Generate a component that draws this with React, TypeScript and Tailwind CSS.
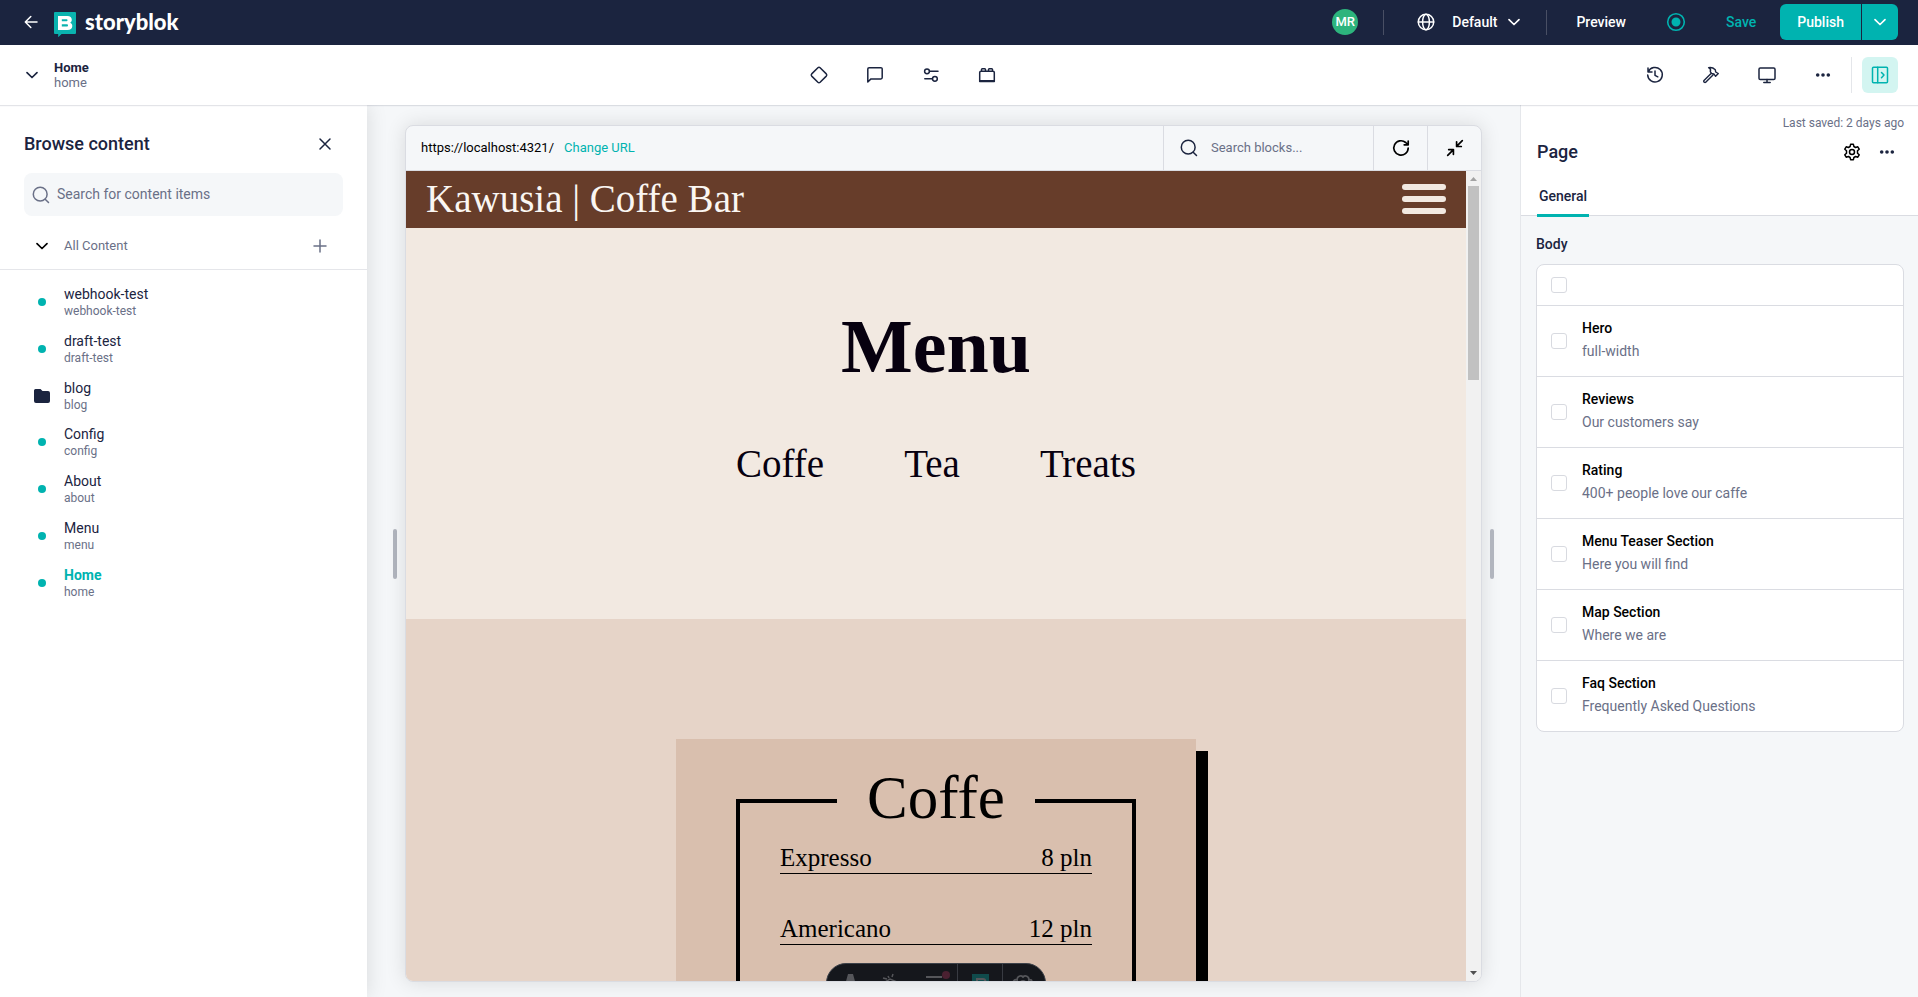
import type { ReactNode } from "react";

type IconProps = { children: ReactNode; size?: string; stroke?: string };

function Icon({ children, size = "size-5", stroke = "1.5" }: IconProps) {
  return (
    <svg
      viewBox="0 0 20 20"
      className={`${size} shrink-0`}
      fill="none"
      stroke="currentColor"
      strokeWidth={stroke}
      strokeLinecap="round"
      strokeLinejoin="round"
      aria-hidden="true"
    >
      {children}
    </svg>
  );
}

const ChevronDown = () => (
  <Icon stroke="1.7">
    <path d="M5 7.7l5 4.8 5-4.8" />
  </Icon>
);

const SearchIcon = () => (
  <Icon>
    <circle cx="9.2" cy="9.2" r="6.9" />
    <path d="M14.200 14.200l3.300 3.300" />
  </Icon>
);

const Dots = () => (
  <svg viewBox="0 0 20 20" className="size-5" fill="currentColor" aria-hidden="true">
    <circle cx="4.7" cy="10" r="1.8" />
    <circle cx="10" cy="10" r="1.8" />
    <circle cx="15.3" cy="10" r="1.8" />
  </svg>
);

function IconButton({ label, children }: { label: string; children: ReactNode }) {
  return (
    <button type="button" aria-label={label} className="flex size-9 items-center justify-center">
      {children}
    </button>
  );
}

function TopBar() {
  return (
    <header className="flex h-[45px] shrink-0 items-center justify-between bg-[#1b243f] pr-5 pb-px pl-[21px] text-sm font-medium text-white">
      <div className="flex items-center">
        <button type="button" aria-label="Back" className="mr-[13px]">
          <Icon>
            <path d="M16 10H4.5M9.8 4.5L4.3 10l5.5 5.5" />
          </Icon>
        </button>
        <a href="#" className="flex items-center gap-[9px]">
          <svg viewBox="0 0 22 25" className="mt-1 h-[25px] w-[22px]" aria-hidden="true">
            <path d="M1 0h20a1 1 0 0 1 1 1v20a1 1 0 0 1-1 1H7.600l-3.400 3.200V22H1a1 1 0 0 1-1-1V1a1 1 0 0 1 1-1z" fill="#0ab3af" />
            <path
              fillRule="evenodd"
              fill="#fff"
              d="M4 4h9.500c2.600 0 4.300 1.500 4.300 3.700 0 1.400-.6 2.400-1.700 3 1.400.5 2.200 1.600 2.200 3.200 0 2.600-1.900 4.100-4.800 4.100H4zM7.800 7.300v2h4.600c.7 0 1.100-.4 1.100-1s-.4-1-1.100-1zM7.800 12.300v2.200h5c.7 0 1.200-.4 1.200-1.100s-.5-1.100-1.200-1.100z"
            />
          </svg>
          <span className="font-[Lato] text-[22px] leading-6 font-black">storyblok</span>
        </a>
      </div>
      <div className="flex items-center">
        <span className="flex size-[26px] items-center justify-center rounded-full bg-[#2db47d] text-[13px]">MR</span>
        <span className="ml-[25px] h-[25px] w-px bg-[#494f64]" />
        <button type="button" className="ml-8 flex items-center">
          <Icon>
            <circle cx="10" cy="10" r="7.7" />
            <ellipse cx="10" cy="10" rx="3.400" ry="7.7" />
            <path d="M2.300 10h15.400" />
          </Icon>
          <span className="mr-[7px] ml-4">Default</span>
          <ChevronDown />
        </button>
        <span className="ml-[22px] h-[25px] w-px bg-[#494f64]" />
        <button type="button" className="ml-[29px]">Preview</button>
        <button type="button" aria-label="Live status" className="ml-10 text-[#00b3b0]">
          <Icon stroke="1.6">
            <circle cx="10" cy="10" r="8.300" />
            <circle cx="10" cy="10" r="3.700" fill="currentColor" />
          </Icon>
        </button>
        <button type="button" className="ml-10 text-[#00b3b0]">Save</button>
        <div className="ml-6 flex h-9 gap-px overflow-hidden rounded-md">
          <button type="button" className="bg-[#00b3b0] px-[17px]">Publish</button>
          <button type="button" aria-label="Publish options" className="flex w-9 items-center justify-center bg-[#00b3b0]">
            <ChevronDown />
          </button>
        </div>
      </div>
    </header>
  );
}

function ToolBar() {
  return (
    <div className="relative z-10 flex h-[60px] shrink-0 items-center justify-between bg-white pr-5 pl-[22px] text-[#1b243f] shadow-[0_1px_1px_rgba(27,36,63,0.12)]">
      <div className="flex w-[147px] items-center gap-3">
        <button type="button" aria-label="Toggle navigation">
          <ChevronDown />
        </button>
        <div className="text-[13px] leading-[15px]">
          <h1 className="font-bold">Home</h1>
          <p className="text-[#6a7087]">home</p>
        </div>
      </div>
      <div className="flex gap-5">
        <IconButton label="Components">
          <Icon>
            <path d="M8.900 2.700a1.600 1.600 0 0 1 2.200 0l6.200 6.200a1.600 1.600 0 0 1 0 2.200l-6.200 6.200a1.600 1.600 0 0 1-2.200 0l-6.200-6.200a1.600 1.600 0 0 1 0-2.200z" />
          </Icon>
        </IconButton>
        <IconButton label="Comments">
          <Icon>
            <path d="M2.800 17V4a1.300 1.300 0 0 1 1.300-1.300h11.800A1.300 1.300 0 0 1 17.200 4v8.600a1.300 1.300 0 0 1-1.300 1.300H6z" />
          </Icon>
        </IconButton>
        <IconButton label="Settings">
          <Icon>
            <circle cx="6" cy="6.300" r="2.400" />
            <path d="M8.600 6.300H17M3.800 13.800h7.600" />
            <circle cx="13.900" cy="13.800" r="2.400" />
          </Icon>
        </IconButton>
        <IconButton label="Blocks">
          <Icon>
            <path d="M4 6.300h12a1.300 1.300 0 0 1 1.300 1.300v8.900H2.700V7.600A1.300 1.300 0 0 1 4 6.300zM4.500 6V4.500a.8.8 0 0 1 .8-.8h2.400a.8.8 0 0 1 .8.8V6M11.500 6V4.500a.8.8 0 0 1 .8-.8h2.400a.8.8 0 0 1 .8.8V6M3 15.700h14" />
          </Icon>
        </IconButton>
      </div>
      <div className="flex items-center gap-5">
        <IconButton label="History">
          <Icon>
            <path d="M3 3v4h4M3.300 6.800A7.300 7.300 0 1 1 2.700 10M10 6v4.300l2.800 1.500" />
          </Icon>
        </IconButton>
        <IconButton label="Tools">
          <Icon stroke="1.4">
            <path d="M10.300 8.300L3 15.600a.9.900 0 0 0 0 1.300l.4.400a.9.900 0 0 0 1.300 0l7.300-7.300M7.600 2.700c2.600-.5 4.800.2 6.700 2.100l.4 2.200 2.600 1.500-2.700 2.800-1.700-2.400-2.400-.4-1.200-1.800c.6-1.600 0-3.200-1.700-4z" />
          </Icon>
        </IconButton>
        <IconButton label="Device">
          <Icon>
            <rect x="2" y="3" width="16" height="11.500" rx="1.300" />
            <path d="M10 14.500v2.800M6.800 17.500h6.400" />
          </Icon>
        </IconButton>
        <IconButton label="More">
          <Dots />
        </IconButton>
        <div className="-ml-[10px] flex items-center gap-[10px]">
          <span className="h-9 w-px bg-[#e4e6ea]" />
          <button type="button" aria-label="Toggle sidebar" className="flex size-9 items-center justify-center rounded-md bg-[#d3f5f1] text-[#00b3b0]">
            <Icon>
              <rect x="2.500" y="2.300" width="15" height="15.400" rx="1" />
              <path d="M7.700 2.300v15.400M11.500 7.500l2.500 2.600-2.500 2.600" />
            </Icon>
          </button>
        </div>
      </div>
    </div>
  );
}

const stories = [
  { name: "webhook-test" },
  { name: "draft-test" },
  { name: "blog", folder: true },
  { name: "Config" },
  { name: "About" },
  { name: "Menu" },
  { name: "Home", active: true },
];

function ContentBrowser() {
  return (
    <aside className="relative w-[367px] shrink-0 bg-white text-[#1b243f] shadow-[0_0_20px_rgba(0,0,0,0.12)]">
      <div className="px-6 pt-6">
        <div className="flex h-[30px] items-center justify-between pr-2">
          <h2 className="text-lg font-medium">Browse content</h2>
          <button type="button" aria-label="Close">
            <Icon>
              <path d="M5 5l10 10M15 5L5 15" />
            </Icon>
          </button>
        </div>
        <label className="mt-[14px] flex h-[43px] items-center gap-[6px] rounded-lg bg-[#f5f7f9] pl-[7px] text-[#6a7087]">
          <SearchIcon />
          <input
            type="search"
            aria-label="Search for content items"
            placeholder="Search for content items"
            className="min-w-0 flex-1 bg-transparent pb-0.5 text-sm outline-none placeholder:text-[#6a7087]"
          />
        </label>
      </div>
      <div className="mt-[13px] flex h-[41px] items-center border-b border-[#e5e6ea] pr-[37px] pb-[7px] pl-8 text-[13px] text-[#6a7087]">
        <button type="button" aria-label="Collapse folder" className="text-black">
          <ChevronDown />
        </button>
        <span className="ml-3 flex-1">All Content</span>
        <button type="button" aria-label="Add content">
          <Icon>
            <path d="M10 4v12M4 10h12" />
          </Icon>
        </button>
      </div>
      <nav className="grid h-[336px] auto-rows-fr pt-[9px] pl-8">
        {stories.map(({ name, folder, active }) => (
          <a key={name} href="#" className="flex items-center gap-3">
            <span className="flex w-5 justify-center">
              {folder ? (
                <svg viewBox="0 0 16 14" className="h-[14px] w-4" fill="currentColor" aria-hidden="true">
                  <path d="M1.500 0h5L8.500 2H14a2 2 0 0 1 2 2v8a2 2 0 0 1-2 2H2a2 2 0 0 1-2-2V1.500A1.500 1.500 0 0 1 1.500 0z" />
                </svg>
              ) : (
                <span className="size-2 rounded-full bg-[#00b3b0]" />
              )}
            </span>
            <span className="flex flex-col">
              <span className={active ? "text-sm leading-[18px] font-bold text-[#00b3b0]" : "text-sm leading-[18px]"}>{name}</span>
              <span className="text-xs leading-4 text-[#6a7087]">{name.toLowerCase()}</span>
            </span>
          </a>
        ))}
      </nav>
    </aside>
  );
}

function MenuRow({ name, price }: { name: string; price: string }) {
  return (
    <li className="flex h-[31px] items-center justify-between border-b border-black pb-0.5">
      <span>{name}</span>
      <span>{price}</span>
    </li>
  );
}

function DevToolbar() {
  return (
    <div className="absolute top-[792px] left-1/2 flex h-10 w-[220px] -translate-x-1/2 overflow-hidden rounded-full border border-[#3c4149] bg-[#15171c] text-[#55565a]">
      <svg viewBox="0 0 218 38" className="h-[38px] w-[218px]" fill="none" stroke="currentColor" strokeWidth="1.500" aria-hidden="true">
        <path d="M16 28l5-18h5l5 18h-4l-3.500-8-3.500 8z" fill="currentColor" stroke="none" />
        <path d="M56 14l4 1M58 18l5-3 7 3M61 12l1 2M66 10l-1 3M60 19l3 4" />
        <path d="M99 13h16M99 20h20" strokeWidth="2" />
        <circle cx="119" cy="11" r="4" fill="#4a2031" stroke="none" />
        <path d="M130.500 0v38M175.500 0v38" stroke="#383b42" strokeWidth="1" />
        <path d="M145 10h17v17h-17z" fill="#104b4c" stroke="none" />
        <path d="M150 20v-5h6c3 0 3 4 1 5" strokeWidth="2" />
        <path d="M188 20c-3-2-1-5 2-4 0-4 4-5 6-3 2-2 6-1 6 3 3-1 4 2 1 4M192 21a4 4 0 0 1 8 0" strokeWidth="1.800" />
      </svg>
    </div>
  );
}

function SitePreview() {
  return (
    <div className="relative min-w-0 flex-1 overflow-hidden bg-[#e6d4c8] font-['Liberation_Serif',serif] text-black">
      <div className="flex h-[57px] items-center justify-between bg-[#673d2a] px-5 pb-0.5 text-[39px] leading-none text-[#faf6f2]">
        <span className="whitespace-nowrap">Kawusia | Coffe Bar</span>
        <button type="button" aria-label="Open menu" className="flex w-11 flex-col gap-[6px]">
          <span className="h-[6px] rounded-full bg-[#f2e9e1]" />
          <span className="h-[6px] rounded-full bg-[#f2e9e1]" />
          <span className="h-[6px] rounded-full bg-[#f2e9e1]" />
        </button>
      </div>
      <section className="flex h-[391px] flex-col items-center bg-[#f2e9e1] pt-[74px] text-[#07000f]">
        <h2 className="text-[76px] leading-[88px] font-bold">Menu</h2>
        <nav className="mt-[52px] flex gap-20 text-[39px] leading-[44px]">
          <a href="#">Coffe</a>
          <a href="#">Tea</a>
          <a href="#">Treats</a>
        </nav>
      </section>
      <section className="flex justify-center pt-[120px]">
        <div className="h-[640px] w-[520px] bg-[#d9bfae] px-[60px] pt-[60px] shadow-[12px_12px_0_#000]">
          <div className="flex h-[520px] flex-col items-center border-4 border-black">
            <h3 className="-mt-[39px] bg-[#d9bfae] px-[30px] text-[61px] leading-[68px]">Coffe</h3>
            <ul className="mt-[11px] flex w-[312px] flex-col gap-10 text-[25px] leading-none">
              <MenuRow name="Expresso" price="8 pln" />
              <MenuRow name="Americano" price="12 pln" />
            </ul>
          </div>
        </div>
      </section>
      <DevToolbar />
    </div>
  );
}

function Canvas() {
  return (
    <main className="flex min-w-0 flex-1 items-center gap-2 px-[26px] pt-5 pb-[15px]">
      <span className="h-[50px] w-1 shrink-0 rounded-full bg-[#b1b5be]" />
      <div className="flex h-full min-w-0 flex-1 flex-col overflow-hidden rounded-lg border border-[#dadce2] bg-[#f5f7f9] shadow-[0_0_20px_rgba(0,0,0,0.12)]">
        <div className="flex h-[45px] shrink-0 items-stretch border-b border-[#dadce2] text-[13px]">
          <div className="flex flex-1 items-center gap-[10px] pl-[15px]">
            <span>https://localhost:4321/</span>
            <a href="#" className="text-[#00b3b0]">Change URL</a>
          </div>
          <label className="flex w-[210px] items-center gap-3 border-l border-[#dadce2] pl-[15px] text-[#1b243f]">
            <SearchIcon />
            <input type="search" aria-label="Search blocks" placeholder="Search blocks..." className="w-36 bg-transparent outline-none placeholder:text-[#6a7087]" />
          </label>
          <button type="button" aria-label="Reload" className="flex w-[54px] items-center justify-center border-l border-[#dadce2]">
            <Icon stroke="1.700">
              <path d="M17.200 10a7.200 7.200 0 1 1-2.500-5.500l2 1.900M17.200 3v3.800h-4" />
            </Icon>
          </button>
          <button type="button" aria-label="Exit full width" className="flex w-[54px] items-center justify-center border-l border-[#dadce2]">
            <Icon stroke="1.700">
              <path d="M17.300 2.700l-5.500 5.500M11.600 3.800v4.700h4.700M2.700 17.300l5.500-5.500M3.700 11.600h4.700v4.700" />
            </Icon>
          </button>
        </div>
        <div className="flex min-h-0 flex-1">
          <SitePreview />
          <div className="flex w-[15px] shrink-0 flex-col items-center bg-[#f1f1f1]">
            <svg viewBox="0 0 15 15" className="size-[15px]" aria-hidden="true">
              <path d="M4 10h7L7.500 6z" fill="#a3a3a3" />
            </svg>
            <span className="h-[194px] w-[11px] bg-[#c1c1c1]" />
            <svg viewBox="0 0 15 15" className="mt-auto size-[15px]" aria-hidden="true">
              <path d="M4 5h7L7.500 9z" fill="#505050" />
            </svg>
          </div>
        </div>
      </div>
      <span className="h-[50px] w-1 shrink-0 rounded-full bg-[#b1b5be]" />
    </main>
  );
}

const blocks = [
  { name: "Hero", text: "full-width" },
  { name: "Reviews", text: "Our customers say" },
  { name: "Rating", text: "400+ people love our caffe" },
  { name: "Menu Teaser Section", text: "Here you will find" },
  { name: "Map Section", text: "Where we are" },
  { name: "Faq Section", text: "Frequently Asked Questions" },
];

const checkboxClass = "size-4 shrink-0 appearance-none rounded-[3px] border border-[#d8dae0] bg-white";

function BlockPanel() {
  return (
    <aside className="w-[398px] shrink-0 border-l border-[#e5e7eb] text-sm text-[#1b243f]">
      <div className="border-b border-[#dadce2] bg-white pt-[10px] pr-[14px] pl-4">
        <p className="text-right text-xs leading-4 text-[#6a7087]">Last saved: 2 days ago</p>
        <div className="mt-[6px] flex h-[30px] items-center justify-between pr-[7px]">
          <h2 className="text-lg font-medium">Page</h2>
          <div className="flex items-center gap-[15px]">
            <button type="button" aria-label="Block settings" className="text-black">
              <Icon>
                <path d="M8.600 2.300h2.800l.5 2.200 1.700 1 2.200-.7 1.400 2.400-1.700 1.600v2.400l1.700 1.600-1.400 2.400-2.200-.7-1.700 1-.5 2.200H8.600l-.5-2.200-1.700-1-2.200.7-1.400-2.400 1.700-1.600V8.800L2.800 7.200l1.400-2.400 2.200.7 1.700-1z" />
                <circle cx="10" cy="10" r="2.500" />
              </Icon>
            </button>
            <button type="button" aria-label="More">
              <Dots />
            </button>
          </div>
        </div>
        <div className="mt-3 -mb-[2px] flex" role="tablist">
          <button type="button" role="tab" aria-selected="true" className="h-[38px] border-b-3 border-[#00b3b0] px-[2px] pb-0.5 font-medium">
            General
          </button>
        </div>
      </div>
      <div className="pt-[18px] pr-[14px] pl-[15px]">
        <h3 className="leading-5 font-medium">Body</h3>
        <div className="mt-[10px] divide-y divide-[#dadce2] rounded-lg border border-[#dadce2] bg-white">
          <div className="flex h-[41px] items-center pl-[14px]">
            <input type="checkbox" aria-label="Select all blocks" className={checkboxClass} />
          </div>
          {blocks.map((block) => (
            <label key={block.name} className="flex h-[71px] items-center gap-[15px] pl-[14px] last:h-[70px]">
              <input type="checkbox" className={checkboxClass} />
              <span className="flex flex-col pb-0.5 leading-[23px]">
                <span className="font-medium text-black">{block.name}</span>
                <span className="text-[#6a7087]">{block.text}</span>
              </span>
            </label>
          ))}
        </div>
      </div>
    </aside>
  );
}

export default function App() {
  return (
    <div className="flex h-screen flex-col overflow-hidden bg-[#f5f7f9] font-[Roboto,sans-serif]">
      <TopBar />
      <ToolBar />
      <div className="flex min-h-0 flex-1">
        <ContentBrowser />
        <Canvas />
        <BlockPanel />
      </div>
    </div>
  );
}
